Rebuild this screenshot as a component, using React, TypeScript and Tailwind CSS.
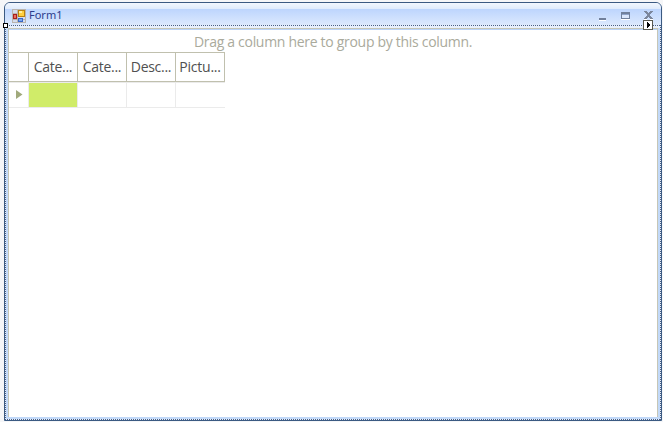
const columns = ['Cate...', 'Cate...', 'Desc...', 'Pictu...'];
const spacing = [
  'tracking-[-0.3px]',
  'tracking-[-0.3px]',
  'tracking-[-0.3px]',
  'tracking-[-0.2px]',
];

function FormIcon() {
  return (
    <svg width="14" height="14" viewBox="0 0 14 14" shapeRendering="crispEdges">
      <path d="M0.5 0.5H13.5V13.5H0.5Z" fill="#d5dcec" stroke="#b9b4ae" />
      <path d="M5.5 1V14M0 10.5H14M0 4.5H6" stroke="#b9b4ae" />
      <rect x="1" y="5" width="4" height="5" fill="#a82020" />
      <rect x="2" y="6" width="2" height="3" fill="#e8705e" />
      <rect x="6" y="1" width="7" height="7" fill="#b98210" />
      <rect x="7" y="2" width="5" height="5" fill="#ffd040" />
      <rect x="7" y="2" width="3" height="2" fill="#fff0a0" />
      <rect x="6" y="9" width="5" height="4" fill="#3968c8" />
      <rect x="7" y="10" width="3" height="2" fill="#79a7ef" />
    </svg>
  );
}

function WindowButtons() {
  return (
    <svg width="56" height="12" viewBox="0 0 56 12" shapeRendering="crispEdges">
      <rect x="0" y="8" width="7" height="2" fill="#71809b" />
      <rect x="0" y="10" width="7" height="1" fill="#fff" />
      <path d="M22 2H31V9H22Z M23 5V8H30V5Z" fill="#71809b" fillRule="evenodd" />
      <rect x="23" y="4" width="7" height="1" fill="#8fa3c8" />
      <rect x="23" y="5" width="7" height="3" fill="#dbe7fb" />
      <rect x="22" y="9" width="9" height="1" fill="#fff" />
      <path d="M45 1h3v1h1v1h1v-1h1v-1h3v1h-1v1h-1v1h-1v2h1v1h1v1h1v1h-3v-1h-1v-1h-1v1h-1v1h-3v-1h1v-1h1v-1h1v-2h-1v-1h-1v-1h-1z" fill="#7c879c" />
      <path d="M45 9h3v1h-3zM51 9h3v1h-3z" fill="#fff" />
    </svg>
  );
}

function Grid() {
  return (
    <div className="flex w-[216px] flex-col">
      <div className="flex h-[30px] border-y border-[#c0c0ae]">
        <div className="w-5 border-r border-[#c0c0ae]" />
        {columns.map((label, i) => (
          <div
            key={i}
            className={`flex w-[49px] items-center justify-center whitespace-nowrap border-r border-[#c0c0ae] text-[14px] leading-[18px] text-[#505050] ${spacing[i]}`}
          >
            {label}
          </div>
        ))}
      </div>
      <div className="flex h-[26px] border-y border-[#ebebeb]">
        <div className="flex w-5 items-center border-r border-[#ebebeb] pb-px pl-[7px]">
          <svg width="7" height="9" viewBox="0 0 7 9">
            <path d="M0 0L6.5 4.5L0 9Z" fill="#a0a97b" />
          </svg>
        </div>
        <div className="w-[49px] border-r border-[#ebebeb] bg-[#d0ec69]" />
        <div className="w-[49px] border-r border-[#ebebeb]" />
        <div className="w-[49px] border-r border-[#ebebeb]" />
        <div className="w-[49px]" />
      </div>
    </div>
  );
}

export default function App() {
  return (
    <div className="relative h-[422px] w-[663px] overflow-hidden bg-[#f5f6f8] pl-1 pt-0.5 font-['Open_Sans','Noto_Sans',sans-serif]">
      <div className="flex h-[419px] w-[658px] flex-col overflow-hidden rounded-t-[6px] border border-[#3b5a82] bg-[#c2d9f9]">
        <div className="h-[6px] shrink-0 bg-linear-to-b from-[#f2f7fe] to-[#dfebfc]" />
        <div className="flex h-4 shrink-0 items-start bg-linear-to-b from-[#bdd5fd] to-[#dce9fd] pl-[7px] pr-1">
          <FormIcon />
          <span className="-mt-0.5 ml-[3px] font-['Noto_Sans',sans-serif] text-[11px] leading-4 text-[#2c3c8c]">
            Form1
          </span>
          <div className="ml-auto flex pr-0.5 pt-px">
            <WindowButtons />
          </div>
        </div>
        <div className="flex flex-1 flex-col bg-[#c2d9f9] px-px pb-px pt-px">
          <div className="h-0.5 shrink-0 bg-[#e8f0fd]" />
          <div className="mx-0.5 mb-0.5 flex flex-1 flex-col border-x border-t border-[#c6c6b6] bg-white">
            <div className="-mb-px flex h-6 shrink-0 flex-col border-t border-[#b8d2f8]">
              <div className="flex flex-1 items-center justify-center text-[14px] leading-[18px] tracking-[-0.3px] text-[#aaaa9c]">
                <span>Drag a column here to group by this column.</span>
              </div>
            </div>
            <Grid />
          </div>
        </div>
      </div>

      <svg className="absolute left-0 top-0" width="663" height="422" shapeRendering="crispEdges">
        <path d="M5 25.5H661M5 419.5H661M5.5 25V420M660.5 25V420" stroke="#e8f0fc" fill="none" />
        <path d="M5.5 25V420M660.5 25V420M5 25.5H661M5 419.5H661" stroke="#4a6085" strokeDasharray="1 1" fill="none" />
        <rect x="3.5" y="23.5" width="4" height="4" fill="#fff" stroke="#000" />
        <rect x="643.5" y="20.5" width="9" height="9" rx="1" fill="#fff" stroke="#58584e" />
        <path d="M647 22h1v1h1v1h1v2h-1v1h-1v1h-1z" fill="#000" />
      </svg>
    </div>
  );
}
